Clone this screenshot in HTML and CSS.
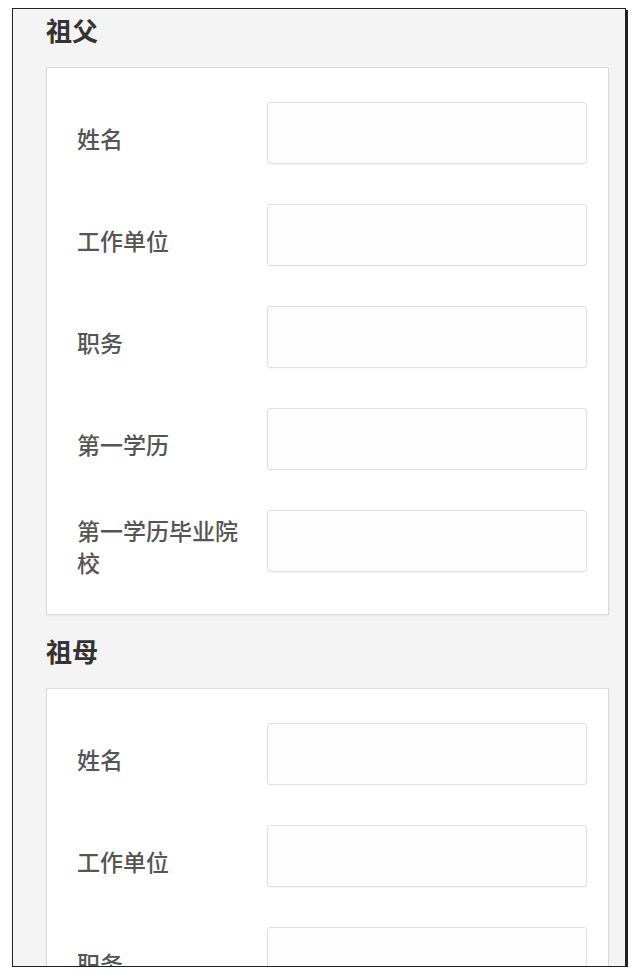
FILE: index.html
```html
<!DOCTYPE html>
<html lang="zh-CN">
<head>
    <meta charset="UTF-8">
    <meta name="viewport" content="width=device-width, initial-scale=1.0">
    <title>家庭成员信息</title>
    <link rel="stylesheet" href="styles.css">
</head>
<body>
    <div class="screen">
        <div class="section">
            <h2>祖父</h2>
            <div class="card">
                <div class="row">
                    <label for="gf-name">姓名</label>
                    <input type="text" id="gf-name">
                </div>
                <div class="row">
                    <label for="gf-work">工作单位</label>
                    <input type="text" id="gf-work">
                </div>
                <div class="row">
                    <label for="gf-post">职务</label>
                    <input type="text" id="gf-post">
                </div>
                <div class="row">
                    <label for="gf-edu">第一学历</label>
                    <input type="text" id="gf-edu">
                </div>
                <div class="row">
                    <label for="gf-school">第一学历毕业院校</label>
                    <input type="text" id="gf-school">
                </div>
            </div>
        </div>

        <div class="section">
            <h2>祖母</h2>
            <div class="card">
                <div class="row">
                    <label for="gm-name">姓名</label>
                    <input type="text" id="gm-name">
                </div>
                <div class="row">
                    <label for="gm-work">工作单位</label>
                    <input type="text" id="gm-work">
                </div>
                <div class="row">
                    <label for="gm-post">职务</label>
                    <input type="text" id="gm-post">
                </div>
                <div class="row">
                    <label for="gm-edu">第一学历</label>
                    <input type="text" id="gm-edu">
                </div>
            </div>
        </div>
    </div>
</body>
</html>
```

FILE: styles.css
```css
body {
    margin: 0;
    background-color: white;
    font-family: "Noto Sans CJK SC", "Noto Sans", sans-serif;
    color: #333;
}
.screen {
    margin: 8px 0 0 12px;
    width: 614px;
    height: 959px;
    padding: 4px 16px 0 33px;
    box-sizing: border-box;
    border: 1px solid #222;
    box-shadow: 2px 2px 0 #222;
    background-color: #f4f4f4;
    overflow: hidden;
}
.section + .section {
    margin-top: 19px;
}
.section h2 {
    margin: 0 0 20px;
    font-size: 26px;
    line-height: 34px;
    font-weight: bold;
    color: #333;
}
.card {
    background-color: white;
    border: 1px solid #dadada;
    box-shadow: 0 1px 2px rgba(0,0,0,0.06);
    padding: 34px 21px 42px 30px;
    display: flex;
    flex-direction: column;
    gap: 40px;
}
.row {
    display: flex;
    align-items: center;
    height: 62px;
}
.row label {
    flex: 0 0 170px;
    margin: 10px 20px 0 0;
    font-size: 23px;
    line-height: 32px;
    font-weight: 500;
    color: #555;
}
.row input {
    flex: 1;
    height: 62px;
    box-sizing: border-box;
    border: 1px solid #e0e0e0;
    border-radius: 3px;
    background-color: #fdfdfd;
    box-shadow: 0 1px 1px rgba(0,0,0,0.03);
    font-size: 20px;
    padding: 0 12px;
}
```
